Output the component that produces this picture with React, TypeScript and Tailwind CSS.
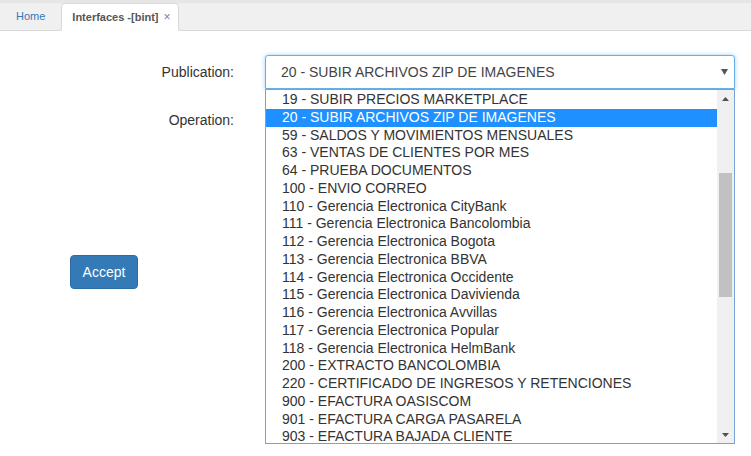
import React from "react";

const options = [
  "19 - SUBIR PRECIOS MARKETPLACE",
  "20 - SUBIR ARCHIVOS ZIP DE IMAGENES",
  "59 - SALDOS Y MOVIMIENTOS MENSUALES",
  "63 - VENTAS DE CLIENTES POR MES",
  "64 - PRUEBA DOCUMENTOS",
  "100 - ENVIO CORREO",
  "110 - Gerencia Electronica CityBank",
  "111 - Gerencia Electronica Bancolombia",
  "112 - Gerencia Electronica Bogota",
  "113 - Gerencia Electronica BBVA",
  "114 - Gerencia Electronica Occidente",
  "115 - Gerencia Electronica Davivienda",
  "116 - Gerencia Electronica Avvillas",
  "117 - Gerencia Electronica Popular",
  "118 - Gerencia Electronica HelmBank",
  "200 - EXTRACTO BANCOLOMBIA",
  "220 - CERTIFICADO DE INGRESOS Y RETENCIONES",
  "900 - EFACTURA OASISCOM",
  "901 - EFACTURA CARGA PASARELA",
  "903 - EFACTURA BAJADA CLIENTE",
];

export default function App() {
  return (
    <div
      className="w-[751px] h-[456px] bg-white overflow-hidden text-[14px] text-[#333]"
      style={{ fontFamily: '"Liberation Sans", Arial, sans-serif' }}
    >
      {/* tab bar */}
      <div className="h-[31px] bg-[#f0f0f0] border-t-[3px] border-t-[#e6e6e6] border-b border-b-[#d9d9d9] flex items-end pl-[4px]">
        <div className="h-[27px] px-[12px] flex items-center text-[11px] text-[#337ab7]">Home</div>
        <div className="h-[28px] -mb-px ml-[4px] pl-[10px] pr-[7px] flex items-center gap-[5px] bg-white border border-[#d9d9d9] border-b-white rounded-t-[4px] text-[11px] font-bold text-[#555]">
          <span>Interfaces -[bint]</span>
          <span className="text-[#6a89b8] font-normal text-[12px]">×</span>
        </div>
      </div>

      {/* form */}
      <div className="pt-[24px]">
        <div className="flex items-center h-[34px]">
          <div className="w-[234px] text-right text-[14px] text-[#333]">Publication:</div>
          <div className="relative ml-[31px] w-[470px]">
            <div className="h-[34px] border border-[#66afe9] rounded-t-[3px] shadow-[0_0_4px_rgba(102,175,233,0.6)] flex items-center pl-[15px] pr-[6px] text-[#444]">
              <span className="flex-1">20 - SUBIR ARCHIVOS ZIP DE IMAGENES</span>
              <svg width="7" height="6" viewBox="0 0 7 6">
                <path d="M0 0H7L3.5 6Z" fill="#555" />
              </svg>
            </div>
            {/* dropdown list */}
            <div className="absolute left-0 top-[34px] w-[470px] h-[355px] border border-[#7aa0d8] bg-white flex z-10">
              <div className="flex-1 pt-[1px] overflow-hidden">
                {options.map((o, i) => (
                  <div
                    key={o}
                    className={
                      "h-[17.75px] leading-[17.75px] pl-[16px] whitespace-nowrap text-[14px] " +
                      (i === 1 ? "bg-[#1e90ff] text-white" : "text-[#333]")
                    }
                  >
                    {o}
                  </div>
                ))}
              </div>
              <div className="w-[17px] bg-[#f0f0f0] flex flex-col items-center">
                <div className="h-[17px] flex items-center justify-center">
                  <svg width="7" height="4" viewBox="0 0 7 4">
                    <path d="M0 4H7L3.5 0Z" fill="#505050" />
                  </svg>
                </div>
                <div className="mt-[66px] w-[13px] h-[124px] bg-[#c1c1c1]" />
                <div className="flex-1" />
                <div className="h-[17px] flex items-center justify-center">
                  <svg width="7" height="4" viewBox="0 0 7 4">
                    <path d="M0 0H7L3.5 4Z" fill="#505050" />
                  </svg>
                </div>
              </div>
            </div>
          </div>
        </div>

        <div className="flex items-center h-[34px] mt-[14px]">
          <div className="w-[234px] text-right text-[14px] text-[#333]">Operation:</div>
        </div>

        <div className="mt-[118px] pl-[70px]">
          <button className="w-[68px] h-[34px] bg-[#337ab7] border border-[#2e6da4] rounded-[4px] text-white text-[14px]">
            Accept
          </button>
        </div>
      </div>
    </div>
  );
}
